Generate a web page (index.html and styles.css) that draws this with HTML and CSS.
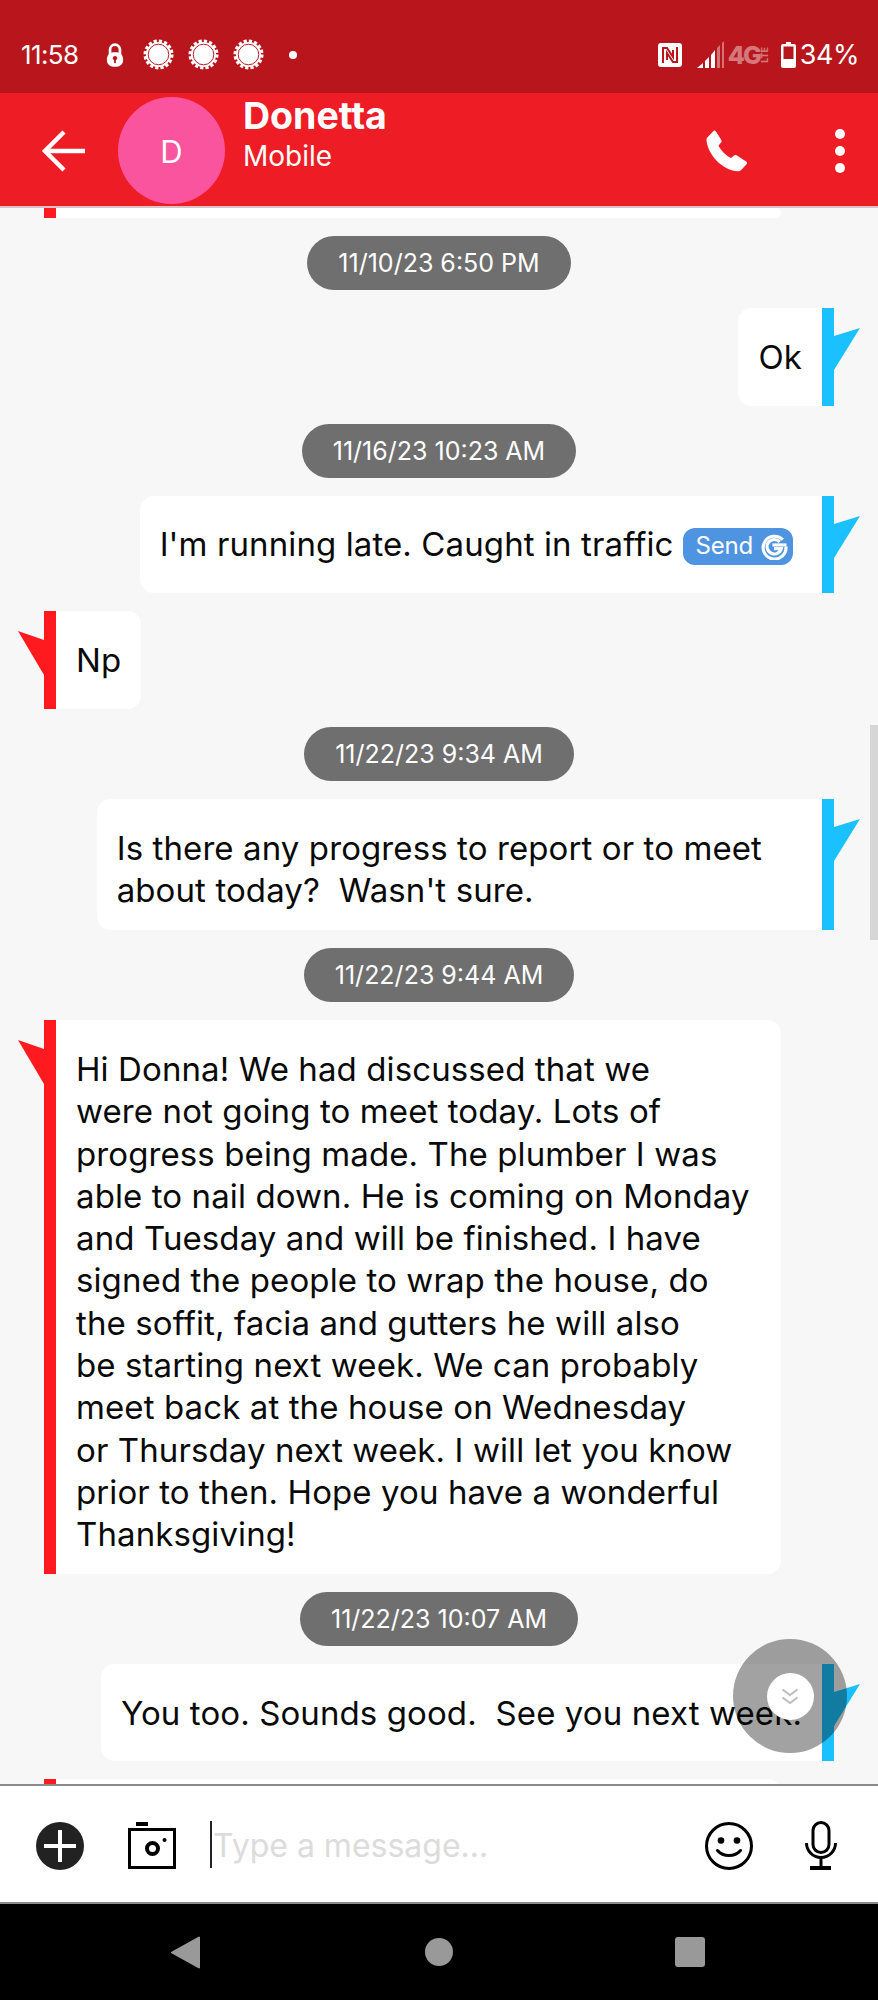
FILE: index.html
```html
<!DOCTYPE html>
<html lang="en">
<head>
<meta charset="utf-8">
<title>Donetta</title>
<link rel="stylesheet" href="styles.css">
</head>
<body>
<div class="app">
  <div class="status">
    <span class="time">11:58</span>
    <svg class="ic-lock" viewBox="0 0 20 28"><path d="M4.5 13V8a5.5 5.5 0 0 1 11 0v5" fill="none" stroke="#fff" stroke-width="3"/><rect x="1" y="11" width="18" height="16" rx="7" fill="#fff"/><circle cx="10" cy="17.5" r="2.4" fill="#b8161c"/><rect x="9" y="18" width="2" height="5" fill="#b8161c"/></svg>
    <svg class="ic-sun" viewBox="0 0 32 32"><circle cx="16" cy="16" r="13" fill="#fff" stroke="#fff" stroke-width="5" stroke-dasharray="3.1 2" /><circle cx="16" cy="16" r="10.6" fill="#fff" stroke="#b8161c" stroke-width="1"/></svg>
    <svg class="ic-sun" viewBox="0 0 32 32"><circle cx="16" cy="16" r="13" fill="#fff" stroke="#fff" stroke-width="5" stroke-dasharray="3.1 2" /><circle cx="16" cy="16" r="10.6" fill="#fff" stroke="#b8161c" stroke-width="1"/></svg>
    <svg class="ic-sun" viewBox="0 0 32 32"><circle cx="16" cy="16" r="13" fill="#fff" stroke="#fff" stroke-width="5" stroke-dasharray="3.1 2" /><circle cx="16" cy="16" r="10.6" fill="#fff" stroke="#b8161c" stroke-width="1"/></svg>
    <span class="dot"></span>
    <div class="status-right">
      <svg class="ic-nfc" viewBox="0 0 24 24"><rect width="24" height="24" rx="3" fill="#fff"/><path d="M5 20V5h4l6 9V7" fill="none" stroke="#b8161c" stroke-width="2"/><path d="M19 4v15h-4L9 10v7" fill="none" stroke="#b8161c" stroke-width="2"/></svg>
      <svg class="ic-signal" viewBox="0 0 27 28"><path d="M0 27l6-5v5zM8 20l4-4v11H8zM14 14l4-5v18h-4z" fill="#fff"/><path d="M20 7l3-3v23h-3zM25 2l2-2v27h-2z" fill="#fff" opacity=".4"/></svg>
      <span class="net"><span class="net-g">4G</span><span class="net-lte">LTE</span></span>
      <svg class="ic-batt" viewBox="0 0 15 26"><path d="M5 0h5v2h3a2 2 0 0 1 2 2v20a2 2 0 0 1-2 2H2a2 2 0 0 1-2-2V4a2 2 0 0 1 2-2h3z" fill="#fff"/><rect x="2.5" y="4.5" width="10" height="12.5" fill="#b8161c"/></svg>
      <span class="pct">34%</span>
    </div>
  </div>

  <header class="bar">
    <svg class="ic-back" viewBox="0 0 46 46"><path d="M44 23H4M23 4L4 23l19 19" fill="none" stroke="#fff" stroke-width="4.5"/></svg>
    <div class="avatar">D</div>
    <div class="who">
      <div class="who-name">Donetta</div>
      <div class="who-sub">Mobile</div>
    </div>
    <svg class="ic-phone" viewBox="0 0 44 44"><path d="M9 1.5c1 0 1.800.6 2.300 1.500l5 8c.5.800.4 1.800-.2 2.500l-2.600 3c2.500 5.300 7.200 10 12.500 12.500l3-2.600c.7-.6 1.700-.7 2.500-.2l9.700 6.300c1 .6 1.100 1.900.3 2.700l-5.500 6c-.8.800-1.900 1.200-3 1.100C16.500 41.200 2.600 25 1.500 11c-.1-1 .3-2 1-2.700z" fill="#fff"/></svg>
    <div class="dots"><i></i><i></i><i></i></div>
  </header>

  <main class="thread">
    <div class="msg in clip"><i class="rule"></i><div class="bubble wide"></div></div>

    <div class="stamp">11/10/23 6:50 PM</div>
    <div class="msg out">
      <div class="bubble">Ok</div><i class="rule"></i>
      <svg class="flag" viewBox="0 0 26 42"><path d="M0 8L26 0 0 42z"/></svg>
    </div>

    <div class="stamp">11/16/23 10:23 AM</div>
    <div class="msg out">
      <div class="bubble with-chip">I'm running late. Caught in traffic
        <span class="chip">Send
          <svg class="ic-g" viewBox="0 0 26 26"><path d="M21 6.500A11 11 0 1 0 24 13" fill="none" stroke="#fff" stroke-width="3"/><path d="M18 8.500A7 7 0 1 0 19.600 15H12.500" fill="none" stroke="#fff" stroke-width="3"/><path d="M11 11.500h13.500" stroke="#fff" stroke-width="3"/></svg>
        </span>
      </div><i class="rule"></i>
      <svg class="flag" viewBox="0 0 26 42"><path d="M0 8L26 0 0 42z"/></svg>
    </div>

    <div class="msg in">
      <svg class="flag" viewBox="0 0 26 42"><path d="M26 9L0 0 26 44z"/></svg>
      <i class="rule"></i><div class="bubble">Np</div>
    </div>

    <div class="stamp">11/22/23 9:34 AM</div>
    <div class="msg out">
      <div class="bubble roomy">Is there any progress to report or to meet<br>about today?  Wasn't sure.</div><i class="rule"></i>
      <svg class="flag" viewBox="0 0 26 42"><path d="M0 8L26 0 0 42z"/></svg>
    </div>

    <div class="stamp">11/22/23 9:44 AM</div>
    <div class="msg in">
      <svg class="flag" viewBox="0 0 26 42"><path d="M26 9L0 0 26 44z"/></svg>
      <i class="rule"></i>
      <div class="bubble wide">Hi Donna! We had discussed that we<br>were not going to meet today. Lots of<br>progress being made. The plumber I was<br>able to nail down. He is coming on Monday<br>and Tuesday and will be finished. I have<br>signed the people to wrap the house, do<br>the soffit, facia and gutters he will also<br>be starting next week. We can probably<br>meet back at the house on Wednesday<br>or Thursday next week. I will let you know<br>prior to then. Hope you have a wonderful<br>Thanksgiving!</div>
    </div>

    <div class="stamp">11/22/23 10:07 AM</div>
    <div class="msg out">
      <div class="bubble">You too. Sounds good.  See you next week.</div><i class="rule"></i>
      <svg class="flag" viewBox="0 0 26 42"><path d="M0 8L26 0 0 42z"/></svg>
    </div>

    <div class="msg in"><i class="rule"></i><div class="bubble wide"></div></div>

    <div class="scrollthumb"></div>
    <div class="fab">
      <div class="fab-inner">
        <svg class="ic-chev" viewBox="0 0 18 17"><path d="M1.500 1.500L9 7l7.500-5.500M1.500 9.500L9 15l7.500-5.500" fill="none" stroke="#bdbdbd" stroke-width="2"/></svg>
      </div>
    </div>
  </main>

  <footer class="composer">
    <svg class="ic-plus" viewBox="0 0 48 48"><circle cx="24" cy="24" r="24" fill="#222"/><path d="M8 24h32M24 8v32" stroke="#fff" stroke-width="4"/></svg>
    <svg class="ic-cam" viewBox="0 0 48 47"><rect x="8" y="0" width="12" height="4" fill="#000"/><rect x="1.500" y="7.500" width="45" height="38" fill="none" stroke="#000" stroke-width="3"/><circle cx="24.500" cy="26.500" r="5.500" fill="none" stroke="#000" stroke-width="4"/><circle cx="36.500" cy="18" r="2" fill="#000"/></svg>
    <div class="input"><i class="caret"></i><span class="placeholder">Type a message...</span></div>
    <svg class="ic-smile" viewBox="0 0 48 48"><circle cx="24" cy="24" r="22.500" fill="none" stroke="#000" stroke-width="3"/><circle cx="16" cy="18.500" r="3.300"/><circle cx="32" cy="18.500" r="3.300"/><path d="M12.500 28.500c3 3.500 7 5 11.500 5s8.500-1.500 11.500-5" fill="none" stroke="#000" stroke-width="3" stroke-linecap="round"/></svg>
    <svg class="ic-mic" viewBox="0 0 32 50"><rect x="8" y="1.500" width="16" height="30" rx="8" fill="none" stroke="#000" stroke-width="3"/><path d="M1.500 22a14.500 14.500 0 0 0 29 0" fill="none" stroke="#000" stroke-width="3"/><path d="M16 36v10" stroke="#000" stroke-width="3"/><rect x="5" y="45" width="21" height="4" fill="#000"/></svg>
  </footer>

  <nav class="sysnav">
    <svg class="ic-tri" viewBox="0 0 29 33"><path d="M28 1.500v30L1 16.500z" fill="#999" stroke="#999" stroke-width="2" stroke-linejoin="round"/></svg>
    <span class="sys-circle"></span>
    <span class="sys-square"></span>
  </nav>
</div>
</body>
</html>
```
FILE: styles.css
```css
* { box-sizing: border-box; }
html, body { margin: 0; padding: 0; }
body { font-family: "Inter", "Liberation Sans", sans-serif; background: #fff; }
.app { width: 878px; height: 2000px; display: flex; flex-direction: column; overflow: hidden; }

.status { height: 93px; flex: none; background: #b8161c; color: #fff; display: flex; align-items: center; padding: 16px 19px 0 21px; }
.time { font-size: 26px; width: 58px; letter-spacing: -0.6px; }
.ic-lock { width: 18px; height: 26px; margin-left: 27px; }
.ic-sun { width: 31px; height: 31px; margin-left: 14px; }
.ic-lock + .ic-sun { margin-left: 19px; }
.dot { width: 8px; height: 8px; border-radius: 50%; background: #fff; margin-left: 25px; }
.status-right { margin-left: auto; display: flex; align-items: center; }
.ic-nfc { width: 24px; height: 24px; }
.ic-signal { width: 27px; height: 28px; margin-left: 15px; }
.net { display: flex; align-items: center; margin-left: 4px; opacity: .42; width: 42px; height: 28px; }
.net-g { font-size: 25px; font-weight: 800; letter-spacing: -2px; line-height: 28px; width: 32px; }
.net-lte { font-size: 9px; font-weight: 700; writing-mode: vertical-rl; transform: rotate(180deg); line-height: 9px; letter-spacing: 0; }
.ic-batt { width: 15px; height: 26px; margin-left: 11px; }
.pct { font-size: 27px; margin-left: 4px; letter-spacing: -0.5px; }

.bar { height: 115px; flex: none; background: #ee1c25; border-bottom: 2px solid #d9c3c4; color: #fff; display: flex; align-items: center; padding: 2px 33px 0 41px; }
.ic-back { width: 46px; height: 46px; }
.avatar { width: 107px; height: 107px; border-radius: 50%; background: #fb549f; margin-left: 31px; padding-top: 2px; display: flex; align-items: center; justify-content: center; font-size: 31px; }
.who { margin-left: 18px; align-self: flex-start; margin-top: -2px; }
.who-name { font-size: 37.500px; font-weight: 700; line-height: 46px; }
.who-sub { font-size: 28px; line-height: 34px; }
.ic-phone { width: 44px; height: 44px; margin-left: auto; }
.dots { display: flex; flex-direction: column; gap: 7px; margin-left: 86px; }
.dots i { width: 10px; height: 10px; border-radius: 50%; background: #fff; display: block; }

.thread { position: relative; flex: 1; min-height: 0; overflow: hidden; background: #f7f7f7; border-bottom: 2px solid #8b8b8b; display: flex; flex-direction: column; gap: 18.100px; align-items: stretch; }
.stamp { align-self: center; flex: none; height: 54px; padding: 0 31px; border-radius: 27px; background: #6f6f6f; color: #fff; font-size: 25px; letter-spacing: 0; display: flex; align-items: center; }
.msg { display: flex; flex: none; align-items: stretch; padding: 0 18px; }
.msg.clip { height: 10px; }
.msg.clip .bubble { min-height: 0; height: 10px; padding: 0; border-bottom-right-radius: 14px; }
.msg.out { justify-content: flex-end; }
.msg.in { justify-content: flex-start; }
.bubble { display: block; background: #fff; color: #0a0a0a; font-size: 33px; line-height: 42.300px; letter-spacing: 0.1px; padding: 28px 20px 18px; min-height: 97.500px; white-space: pre; }
.msg.out .bubble { border-radius: 14px 0 0 14px; }
.msg.in .bubble { border-radius: 0 14px 14px 0; }
.bubble.wide { width: 725px; }
.bubble.roomy { padding-right: 60px; }
.msg.in > .rule:first-child { margin-left: 26px; }
.rule { width: 12px; flex: none; display: block; }
.msg.out .rule { background: #1bc1ff; }
.msg.in .rule { background: #ff1a1f; }
.flag { width: 26px; height: 42px; flex: none; margin-top: 20px; overflow: visible; }
.msg.out .flag { fill: #1bc1ff; }
.msg.in .flag { fill: #ff1a1f; }
.bubble.with-chip { display: flex; flex-direction: row; align-items: center; justify-content: flex-start; padding: 23px 29px 23px 20px; white-space: nowrap; }
.chip { display: inline-flex; align-items: center; gap: 8px; height: 37px; margin: 3px 0 0 9px; padding: 0 5px 0 13px; border-radius: 12px; background: #4f94e0; color: #fff; font-size: 24px; letter-spacing: -0.2px; }
.ic-g { width: 27px; height: 27px; }

.scrollthumb { position: absolute; right: 0; top: 517px; width: 8px; height: 215px; background: #d6d6d6; }
.fab { position: absolute; left: 733px; top: 1431px; width: 114px; height: 114px; border-radius: 50%; background: rgba(3, 3, 3, .37); display: flex; align-items: center; justify-content: center; }
.fab-inner { width: 47px; height: 47px; border-radius: 50%; background: #fff; display: flex; align-items: center; justify-content: center; }
.ic-chev { width: 18px; height: 17px; }

.composer { height: 118px; flex: none; background: #fff; border-bottom: 2px solid #8c8c8c; display: flex; align-items: center; padding: 3px 41px 0 36px; }
.ic-plus { width: 48px; height: 48px; }
.ic-cam { width: 48px; height: 47px; margin-left: 44px; }
.input { display: flex; align-items: center; margin-left: 34px; flex: 1; }
.caret { width: 2px; height: 47px; background: #222; display: block; margin-top: -3px; }
.placeholder { color: #dcdcdc; font-size: 32px; letter-spacing: 0; margin-left: 1px; }
.ic-smile { width: 48px; height: 48px; }
.ic-mic { width: 32px; height: 50px; margin-left: 52px; }

.sysnav { height: 96px; flex: none; background: #000; display: flex; align-items: center; padding-left: 171px; }
.ic-tri { width: 29px; height: 33px; }
.sys-circle { width: 28px; height: 28px; border-radius: 50%; background: #999; margin-left: 225px; }
.sys-square { width: 30px; height: 30px; border-radius: 3px; background: #999; margin-left: 222px; }
```
